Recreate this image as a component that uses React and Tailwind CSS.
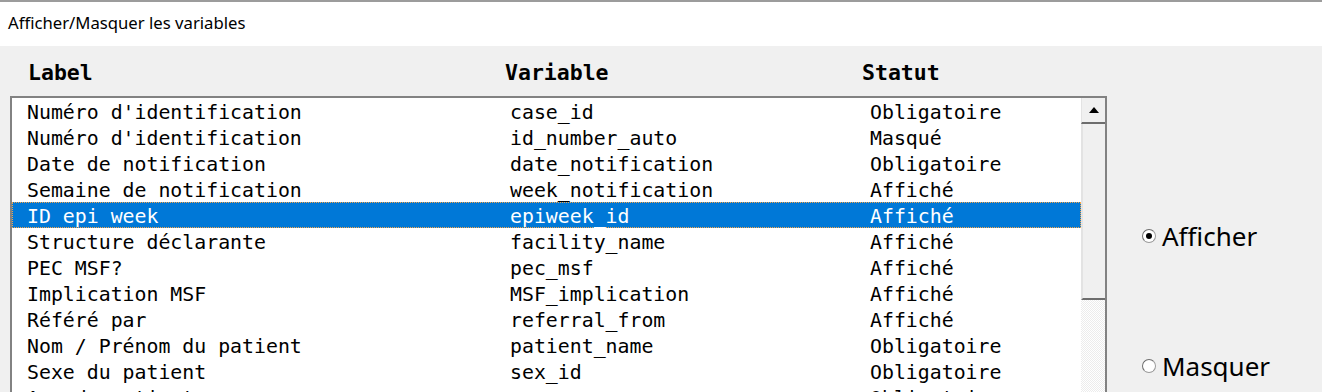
import React from "react";

const rows = [
  ["Numéro d'identification", "case_id", "Obligatoire"],
  ["Numéro d'identification", "id_number_auto", "Masqué"],
  ["Date de notification", "date_notification", "Obligatoire"],
  ["Semaine de notification", "week_notification", "Affiché"],
  ["ID epi week", "epiweek_id", "Affiché"],
  ["Structure déclarante", "facility_name", "Affiché"],
  ["PEC MSF?", "pec_msf", "Affiché"],
  ["Implication MSF", "MSF_implication", "Affiché"],
  ["Référé par", "referral_from", "Affiché"],
  ["Nom / Prénom du patient", "patient_name", "Obligatoire"],
  ["Sexe du patient", "sex_id", "Obligatoire"],
  ["Age du patient", "age", "Obligatoire"],
];

const SELECTED = 4;

function Radio({ checked, label }) {
  return (
    <label className="flex items-center gap-[6px]">
      <span className="flex h-[14px] w-[14px] items-center justify-center rounded-full border border-[#9a9a9a] border-t-[#6d6d6d] border-l-[#6d6d6d] bg-white">
        {checked && <span className="h-[6px] w-[6px] rounded-full bg-black" />}
      </span>
      <span className="text-[26px] leading-none text-black font-['Noto_Sans',sans-serif]">{label}</span>
    </label>
  );
}

export default function App() {
  return (
    <div className="h-[392px] w-[1322px] overflow-hidden bg-[#f0f0f0]">
      {/* Title bar */}
      <div className="h-[2px] bg-[#9c9c9c]" />
      <div className="flex h-[44px] items-center bg-white pl-[8px] pb-[2px] text-[16.7px] text-black font-['Noto_Sans',sans-serif]">
        Afficher/Masquer les variables
      </div>

      <div className="flex">
        {/* Left: headers + list */}
        <div className="flex flex-col">
          <div className="grid h-[50px] grid-cols-[477px_357px_1fr] items-center pl-[28px] pt-[4px] text-[21.5px] font-bold text-black font-['DejaVu_Sans_Mono',monospace]">
            <span>Label</span>
            <span>Variable</span>
            <span>Statut</span>
          </div>

          <div className="ml-[10px] flex w-[1097px] border-t-2 border-l-2 border-r-2 border-[#828282] bg-white">
            <div className="w-[1069px] font-['DejaVu_Sans_Mono',monospace] text-[19.85px] leading-[26px] text-black">
              {rows.map((r, i) => (
                <div
                  key={i}
                  className={
                    i === SELECTED
                      ? "grid h-[26px] grid-cols-[483px_360px_1fr] items-start border border-dotted border-[#f5a54a] bg-[#0078d7] pl-[14px] pt-[1px] text-white"
                      : "grid h-[26px] grid-cols-[483px_360px_1fr] items-start pl-[15px] pt-[2px]"
                  }
                >
                  <span className="whitespace-pre">{r[0]}</span>
                  <span>{r[1]}</span>
                  <span>{r[2]}</span>
                </div>
              ))}
            </div>

            {/* Scrollbar */}
            <div className="flex w-[24px] flex-col">
              <div className="flex h-[26px] items-center justify-center border-b-2 border-[#6d6d6d] border-l border-l-[#e3e3e3] bg-[#f0f0f0]">
                <svg width="10" height="6" viewBox="0 0 10 6">
                  <path d="M0 6 L5 0 L10 6 Z" fill="#000" />
                </svg>
              </div>
              <div className="h-[176px] border-l-2 border-b-2 border-l-[#e3e3e3] border-b-[#6d6d6d] bg-[#f0f0f0]" />
              <div className="h-[120px] bg-[repeating-conic-gradient(#ececec_0_25%,#ffffff_0_50%)] bg-[length:2px_2px]" />
            </div>
          </div>
        </div>

        {/* Right: radios */}
        <div className="flex flex-col pl-[35px]">
          <div className="mt-[177px]">
            <Radio checked label="Afficher" />
          </div>
          <div className="mt-[104px]">
            <Radio label="Masquer" />
          </div>
        </div>
      </div>
    </div>
  );
}
